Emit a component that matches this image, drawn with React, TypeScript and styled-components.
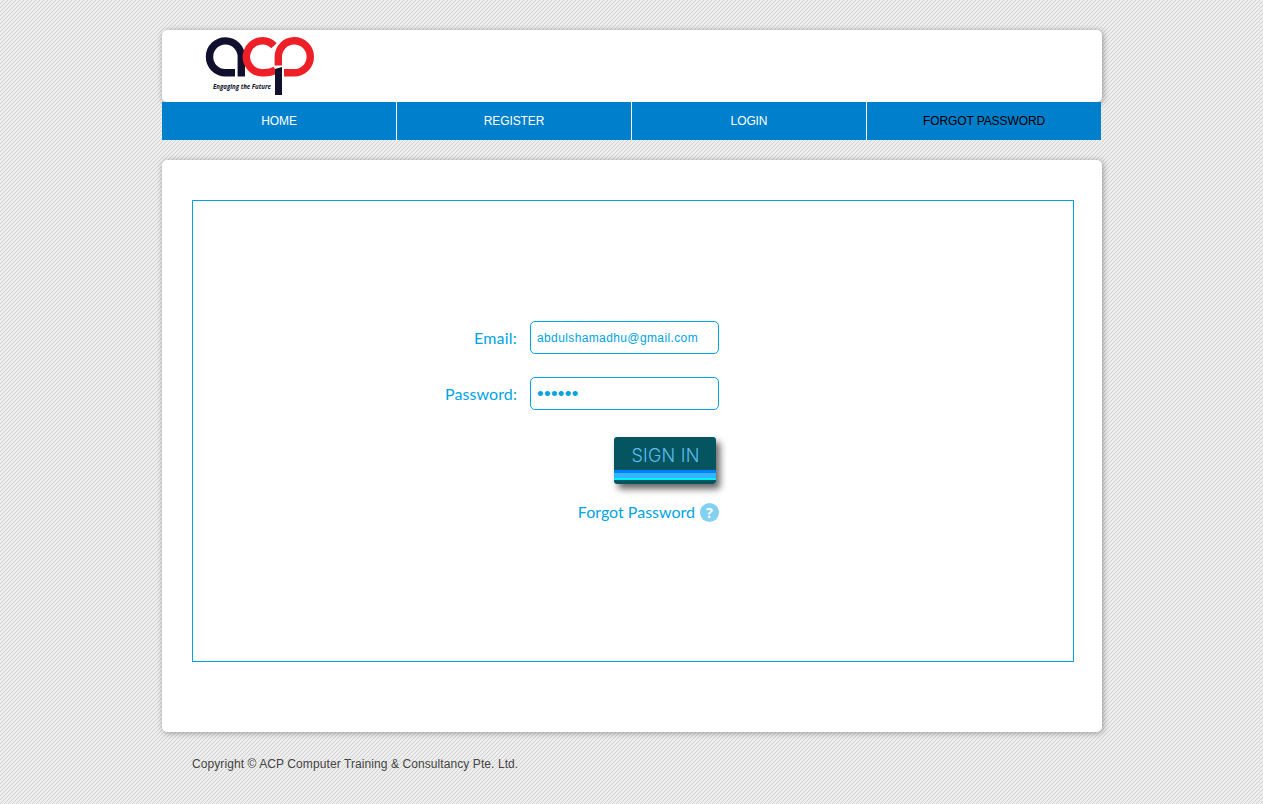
import React from "react";
import styled, { createGlobalStyle } from "styled-components";

const stripe =
  "%3Csvg xmlns='http://www.w3.org/2000/svg' width='4' height='4' shape-rendering='crispEdges'%3E%3Crect width='4' height='4' fill='%23eeeeee'/%3E%3Cpath fill='%23d1d1d1' d='M3 0h1v1h-1zM2 1h1v1h-1zM1 2h1v1h-1zM0 3h1v1h-1z'/%3E%3C/svg%3E";

const GlobalStyle = createGlobalStyle`
  body {
    margin: 0;
    min-height: 804px;
    background: #e6e6e6 url("data:image/svg+xml,${stripe}");
    font-family: "Liberation Sans", Arial, sans-serif;
    font-size: 12px;
    color: #444;
  }
  *, *::before, *::after { box-sizing: border-box; }
`;

const Page = styled.div`
  width: 940px;
  margin-left: 162px;
  padding-top: 30px;
`;

const Card = styled.div`
  background: #fff;
  border-radius: 5px;
  box-shadow: 1px 1px 6px rgba(0, 0, 0, 0.36);
`;

const Header = styled(Card)`
  height: 72px;
  padding: 5px 0 0 41px;
`;

const Nav = styled.nav`
  position: relative;
  display: flex;
  gap: 1px;
  width: 939px;
  height: 38px;
  background: #fff;
`;

const NavItem = styled.a<{ $active?: boolean }>`
  flex: 1;
  background: #007fcc;
  color: ${(p) => (p.$active ? "#000" : "#fff")};
  line-height: 38px;
  letter-spacing: -0.1px;
  text-align: center;
`;

const Content = styled(Card)`
  height: 572px;
  margin-top: 20px;
  padding: 40px 28px 0 30px;
`;

const Frame = styled.main`
  height: 462px;
  border: 1px solid #00a2e2;
  padding: 120px 354px 0 0;
  display: flex;
  flex-direction: column;
  align-items: flex-end;
`;

const Row = styled.label`
  display: flex;
  align-items: center;
  gap: 13px;
  margin-bottom: 23px;
`;

const Caption = styled.span<{ $spacing: number }>`
  font-family: Lato, sans-serif;
  font-size: 16px;
  line-height: 20px;
  letter-spacing: ${(p) => p.$spacing}px;
  color: #00a4e6;
  white-space: nowrap;
`;

const Input = styled.input`
  width: 189px;
  height: 33px;
  padding: 0 6px;
  border: 1px solid #00a2e2;
  border-radius: 5px;
  background: #fff;
  color: #00a2e2;
  font: 12px "Liberation Sans", Arial, sans-serif;
  letter-spacing: 0.38px;
  outline: none;
`;

const Dots = styled(Input)`
  padding-top: 1px;
  font-size: 19px;
  letter-spacing: 0.3px;
`;

const SignIn = styled.button`
  width: 102px;
  height: 47px;
  margin: 4px 3px 0 0;
  padding: 0 0 10px 1px;
  border: 0;
  border-radius: 3px;
  background: linear-gradient(
    #04555f 33px, #0080ff 33px, #0080ff 36px, #33b5ff 36px,
    #33b5ff 41px, #00f0ff 41px, #00f0ff 43px, #04555f 43px
  );
  box-shadow: 4px 5px 7px rgba(0, 0, 0, 0.6);
  color: #5bbcf2;
  font: 300 18px Inter, sans-serif;
  letter-spacing: 0.2px;
  white-space: nowrap;
`;

const Forgot = styled.a`
  display: flex;
  align-items: center;
  gap: 5px;
  margin-top: 18px;
`;

const Footer = styled.footer`
  padding: 24px 30px;
  line-height: 16px;
  letter-spacing: 0.085px;
`;

const Logo = () => (
  <svg width="114" height="62" viewBox="203 35 114 62" fill="none">
    <g strokeWidth="7.4">
      <path d="M241.3 76.500V57a15.900 15.900 0 1 0-15.900 15.700H235" stroke="#10102e" />
      <path d="M274 45.800a16 16 0 1 0-10.500 27Q270 73 275.500 70" stroke="#ee1f26" />
      <path d="M278.300 65.500V57a16 16 0 1 1 16 15.800H284" stroke="#ee1f26" />
    </g>
    <path d="M275 69l7-2v28h-7z" fill="#10102e" />
    <text x="213" y="88.500" fill="#10102e" fontFamily="Open Sans, sans-serif" fontSize="6.500" fontWeight="700" fontStyle="italic" textLength="58" lengthAdjust="spacingAndGlyphs">
      Engaging the Future
    </text>
  </svg>
);

const HelpIcon = () => (
  <svg width="19" height="19" viewBox="0 0 19 19">
    <circle cx="9.5" cy="9.5" r="9.5" fill="#82d0f2" />
    <text x="9.5" y="14.5" textAnchor="middle" fill="#fff" fontFamily="Open Sans, sans-serif" fontSize="14.5" fontWeight="700">?</text>
  </svg>
);

export default function App() {
  return (
    <>
      <GlobalStyle />
      <Page>
        <Header>
          <Logo />
        </Header>
        <Nav>
          <NavItem>HOME</NavItem>
          <NavItem>REGISTER</NavItem>
          <NavItem>LOGIN</NavItem>
          <NavItem $active>FORGOT PASSWORD</NavItem>
        </Nav>
        <Content>
          <Frame>
            <Row>
              <Caption $spacing={0.2}>Email:</Caption>
              <Input defaultValue="abdulshamadhu@gmail.com" />
            </Row>
            <Row>
              <Caption $spacing={0.1}>Password:</Caption>
              <Dots type="password" defaultValue="abcdef" />
            </Row>
            <SignIn>SIGN IN</SignIn>
            <Forgot>
              <Caption $spacing={0}>Forgot Password</Caption>
              <HelpIcon />
            </Forgot>
          </Frame>
        </Content>
        <Footer>Copyright © ACP Computer Training &amp; Consultancy Pte. Ltd.</Footer>
      </Page>
    </>
  );
}
